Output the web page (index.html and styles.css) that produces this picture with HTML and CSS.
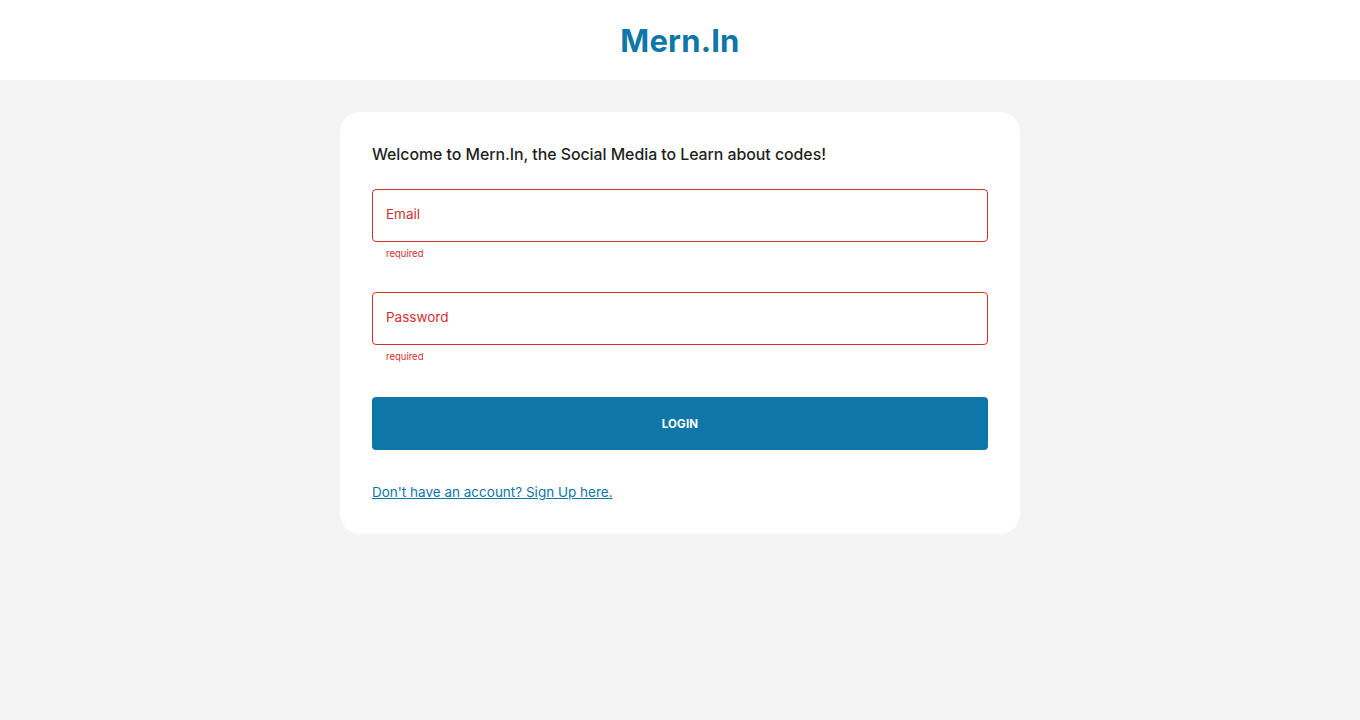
FILE: index.html
```html
<!DOCTYPE html>
<html lang="en">
<head>
<meta charset="utf-8">
<title>Mern.In</title>
<link rel="stylesheet" href="styles.css">
</head>
<body>
<header class="topbar">
  <h1 class="brand">Mern.In</h1>
</header>
<main class="page">
  <form class="card">
    <h2 class="welcome">Welcome to Mern.In, the Social Media to Learn about codes!</h2>
    <div class="field">
      <div class="input-box"><span class="label">Email</span></div>
      <p class="helper">required</p>
    </div>
    <div class="field field-last">
      <div class="input-box"><span class="label">Password</span></div>
      <p class="helper">required</p>
    </div>
    <button type="button" class="login">LOGIN</button>
    <a class="signup" href="#">Don't have an account? Sign Up here.</a>
  </form>
</main>
</body>
</html>
```
FILE: styles.css
```css
* { box-sizing: border-box; }
html, body { margin: 0; padding: 0; }
body {
  background: #f4f4f4;
  font-family: Inter, "Noto Sans", "Liberation Sans", sans-serif;
  color: #1f1f1f;
  min-height: 720px;
}
.topbar {
  height: 80px;
  background: #ffffff;
  display: flex;
  align-items: center;
  justify-content: center;
}
.brand {
  margin: 0;
  font-size: 31px;
  font-weight: 700;
  color: #0e76a8;
  letter-spacing: 0.2px;
}
.page {
  display: flex;
  justify-content: center;
  padding-top: 32px;
}
.card {
  width: 680px;
  background: #ffffff;
  border-radius: 20px;
  padding: 32px 32px 33px;
  display: flex;
  flex-direction: column;
}
.welcome {
  margin: 0 0 24px;
  font-size: 15.9px;
  font-weight: 500;
  line-height: 21px;
  color: #1f1f1f;
  letter-spacing: -0.05px;
}
.field {
  display: flex;
  flex-direction: column;
  margin-bottom: 30px;
}
.field-last { margin-bottom: 32px; }
.input-box {
  height: 53px;
  border: 1px solid #d32f2f;
  border-radius: 4px;
  display: flex;
  align-items: center;
  padding: 0 13px 3px;
}
.label {
  font-size: 13.5px;
  color: #d32f2f;
}
.helper {
  margin: 4px 0 0 14px;
  font-size: 9.5px;
  line-height: 16px;
  color: #d32f2f;
}
.login {
  height: 53px;
  border: none;
  border-radius: 4px;
  background: #0e76a8;
  color: #ffffff;
  font-family: inherit;
  font-size: 11.5px;
  font-weight: 700;
  letter-spacing: 0.2px;
  margin-bottom: 33px;
}
.signup {
  font-size: 13.5px;
  line-height: 18px;
  color: #0e76a8;
  text-decoration: underline;
  align-self: flex-start;
}
```
